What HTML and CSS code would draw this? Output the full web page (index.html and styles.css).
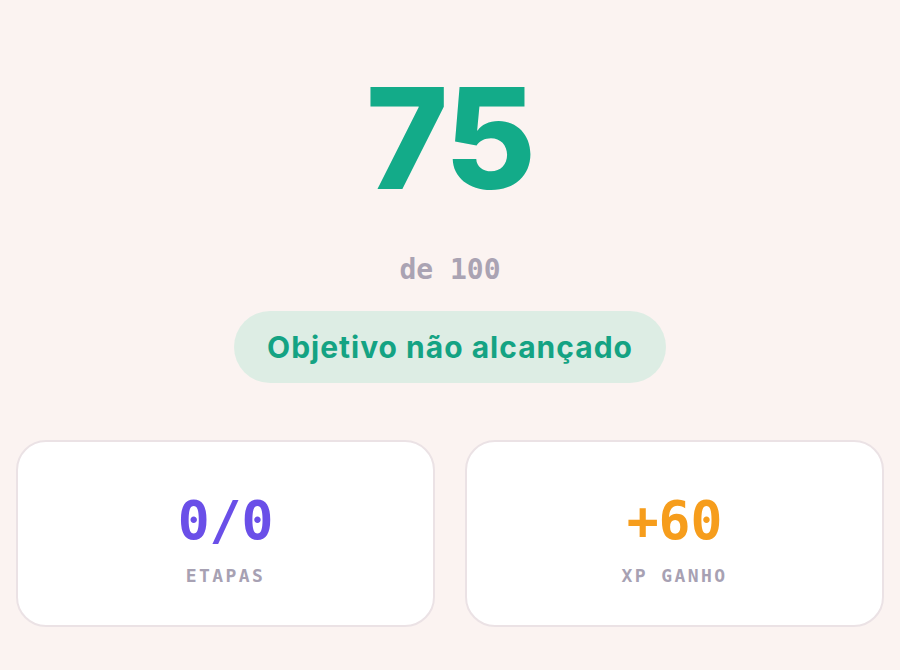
FILE: index.html
```html
<!DOCTYPE html>
<html lang="pt">
<head>
<meta charset="utf-8">
<link rel="stylesheet" href="styles.css">
</head>
<body>
<main class="result">
  <div class="score">75</div>
  <div class="total">de 100</div>
  <div class="status">Objetivo não alcançado</div>
  <section class="stats">
    <div class="card">
      <div class="value value-purple">0/0</div>
      <div class="label">ETAPAS</div>
    </div>
    <div class="card">
      <div class="value value-orange">+60</div>
      <div class="label">XP GANHO</div>
    </div>
  </section>
</main>
</body>
</html>
```
FILE: styles.css
```css
html, body {
  margin: 0;
  padding: 0;
  background: #fbf3f1;
}
body {
  font-family: Inter, "Noto Sans", sans-serif;
}
.result {
  display: flex;
  flex-direction: column;
  align-items: center;
  padding: 58px 16px 0;
}
.score {
  font-size: 140px;
  font-weight: 800;
  line-height: 1.15;
  color: #13ab89;
  letter-spacing: -2px;
}
.total {
  margin-top: 35px;
  font-family: "DejaVu Sans Mono", "Liberation Mono", monospace;
  font-weight: 700;
  font-size: 28px;
  line-height: 31px;
  color: #aaa3b3;
}
.status {
  margin-top: 26px;
  width: 432px;
  height: 72px;
  box-sizing: border-box;
  display: flex;
  align-items: center;
  justify-content: center;
  border-radius: 36px;
  background: #ddede4;
  color: #14a383;
  font-family: Inter, "Open Sans", sans-serif;
  font-weight: 700;
  font-size: 30px;
  letter-spacing: 1px;
}
.stats {
  margin-top: 57px;
  align-self: stretch;
  display: grid;
  grid-template-columns: 1fr 1fr;
  gap: 30px;
}
.card {
  height: 187px;
  box-sizing: border-box;
  padding-top: 12px;
  border: 2px solid #ebe2e5;
  border-radius: 30px;
  background: #ffffff;
  display: flex;
  flex-direction: column;
  align-items: center;
  justify-content: center;
}
.value {
  font-family: "DejaVu Sans Mono", "Liberation Mono", monospace;
  font-weight: 700;
  font-size: 53px;
  line-height: 1;
}
.value-purple { color: #6a4fe8; }
.value-orange { color: #f69d1c; }
.label {
  margin-top: 18px;
  font-family: "DejaVu Sans Mono", "Liberation Mono", monospace;
  font-weight: 700;
  font-size: 18px;
  letter-spacing: 2.4px;
  color: #a7a1b3;
}
```
